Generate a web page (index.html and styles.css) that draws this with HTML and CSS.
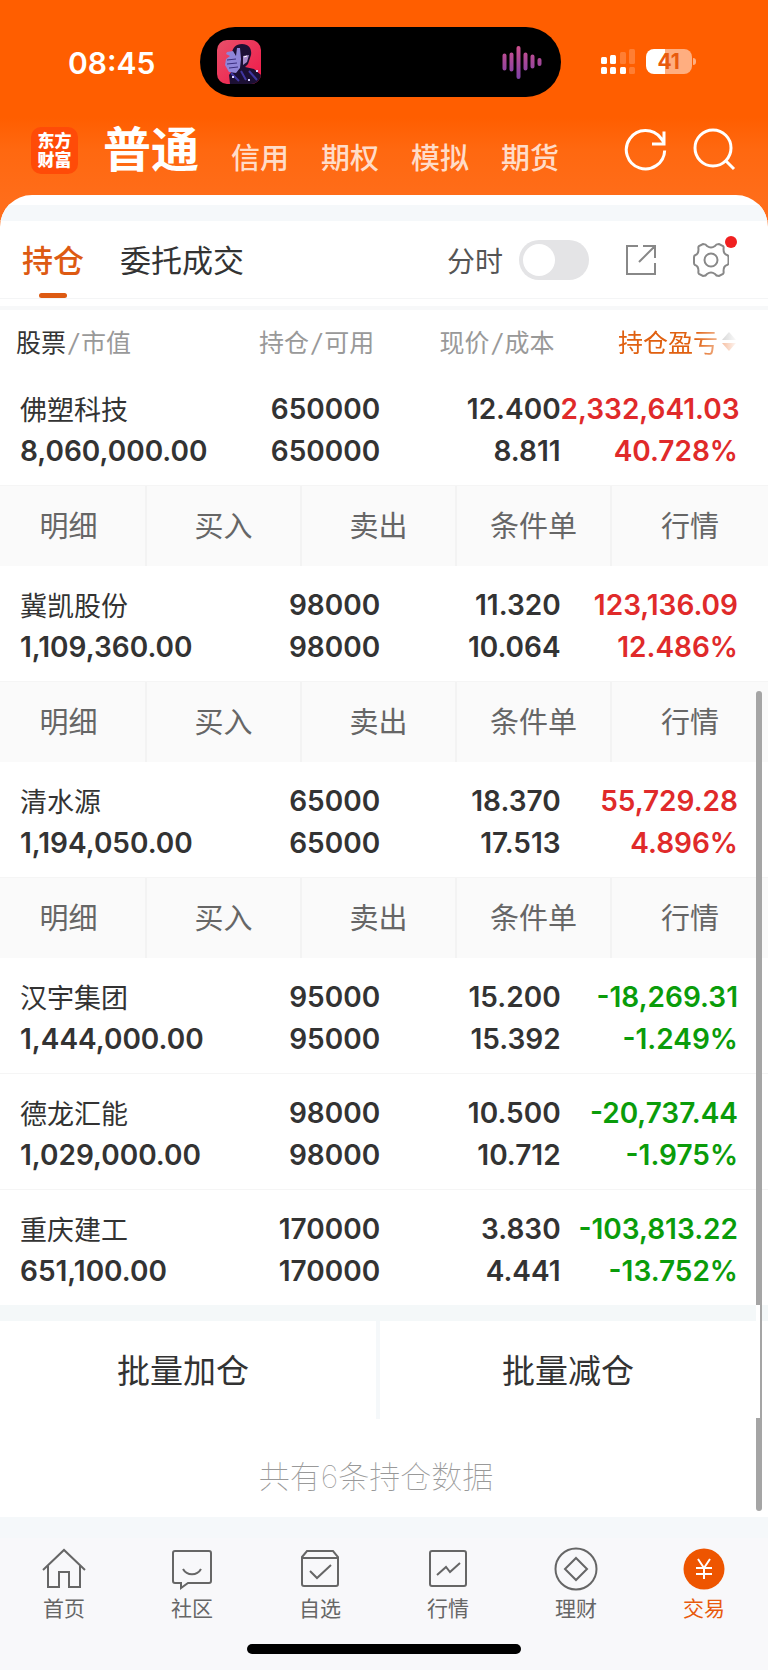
FILE: index.html
```html
<!DOCTYPE html>
<html lang="zh-CN">
<head>
    <meta charset="UTF-8">
    <meta name="viewport" content="width=device-width, initial-scale=1.0">
    <title>东方财富 - 持仓</title>
    <link rel="stylesheet" href="styles.css">
</head>
<body>
    <header class="top">
        <!-- Status bar -->
        <div class="status">
            <span class="time">08:45</span>
            <div class="island">
                <svg class="cover" viewBox="0 0 44 44">
                    <defs>
                        <linearGradient id="coverBg" x1="0" y1="0" x2="1" y2="1">
                            <stop offset="0" stop-color="#e8506a"/>
                            <stop offset="1" stop-color="#f01848"/>
                        </linearGradient>
                        <clipPath id="coverClip"><rect width="44" height="44" rx="10"/></clipPath>
                    </defs>
                    <g clip-path="url(#coverClip)">
                        <rect width="44" height="44" fill="url(#coverBg)"/>
                        <path d="M15 14c0-6 4-10 10-10 7 0 10 5 9 11l-3 9-3 3 9 2 7 6v9H13l-1-9 6-8z" fill="#1c1034"/>
                        <path d="M26 16l6-1-2 7-4 3z" fill="#a58ac8"/>
                        <path d="M27 17l3-1" stroke="#fff" stroke-width="1"/>
                        <path d="M10 12l6-1 3 5 1-8h3l1 11-1 9-4 5-7-1-4-7 1-6 4-3-4-2z" fill="#8f85d8"/>
                        <path d="M10 20l9-1M10 24l10-1M12 28l9-1" stroke="#3c3080" stroke-width="1.200"/>
                        <path d="M14 33l8 8M24 31l5 9M32 31l8 9" stroke="#4036a0" stroke-width="2"/>
                        <path d="M15 37h2M31 40h2M39 31h2" stroke="#d8d4ff" stroke-width="2"/>
                    </g>
                </svg>
                <svg class="wave" viewBox="0 0 40 34">
                    <defs>
                        <linearGradient id="waveColor" x1="0" y1="0" x2="0" y2="34" gradientUnits="userSpaceOnUse">
                            <stop offset="0" stop-color="#d0508c"/>
                            <stop offset="1" stop-color="#7c3fa6"/>
                        </linearGradient>
                    </defs>
                    <path d="M2.500 10.500v13M9.500 9.500v15M16.500 3v29M23.500 9.500v14M30.500 11.500v10M37.500 15v4" stroke="url(#waveColor)" stroke-width="4" stroke-linecap="round"/>
                </svg>
            </div>
            <svg class="signal" viewBox="0 0 36 26">
                <g>
                    <rect x="1" y="8" width="6" height="7" rx="1.500"/>
                    <rect x="10" y="6" width="6" height="9" rx="1.500"/>
                    <rect x="1" y="18" width="6" height="7" rx="1.500"/>
                    <rect x="10" y="18" width="6" height="7" rx="1.500"/>
                    <rect x="20" y="18" width="6" height="7" rx="1.500"/>
                </g>
                <g opacity=".2">
                    <rect x="20" y="3" width="6" height="12" rx="1.500"/>
                    <rect x="29" y="0" width="6" height="15" rx="1.500"/>
                    <rect x="29" y="18" width="6" height="7" rx="1.500"/>
                </g>
            </svg>
            <span class="battery">41</span>
        </div>

        <!-- Account type navigation -->
        <nav class="accounts">
            <span class="logo">东方<br>财富</span>
            <a href="#" class="current">普通</a>
            <a href="#">信用</a>
            <a href="#">期权</a>
            <a href="#">模拟</a>
            <a href="#">期货</a>
            <button class="refresh" aria-label="刷新">
                <svg viewBox="0 0 44 44"><path d="M40.700 22.500a19.200 19.200 0 1 1-4-12.500l3 4M40 3.500v12.500H28"/></svg>
            </button>
            <button class="search" aria-label="搜索">
                <svg viewBox="0 0 44 44"><circle cx="21" cy="20" r="18"/><path d="M33 32l9 9"/></svg>
            </button>
        </nav>
    </header>

    <main class="panel">
        <div class="tabs">
            <button class="tab active">持仓</button>
            <button class="tab">委托成交</button>
            <label class="switch">分时 <input type="checkbox"></label>
            <button class="tool" aria-label="分享">
                <svg viewBox="0 0 36 36"><path d="M15 4H4v28h28V21M20 4h12v12M32 4L16 20"/></svg>
            </button>
            <button class="tool settings" aria-label="设置">
                <svg viewBox="0 0 36 36"><path d="M10 2Q13 2 14 4q4 3 8 0 1-2 4-2l4 2q1 1 .5 3 0 5 3.500 6 1.500.5 1.500 2v6q0 1.500-1.500 2-3.500 1-3.500 6 .5 2-.5 3l-4 2q-3 0-4-2-4-3-8 0-1 2-4 2l-4-2q-1-1-.5-3 0-5-3.500-6Q1 22.500 1 21v-6q0-1.500 1.500-2Q5.500 12 5.500 7 5 5 6 4z"/><circle cx="18" cy="18" r="6.500"/></svg>
            </button>
        </div>

        <table class="holdings">
            <thead>
                <tr>
                    <th><b>股票</b><i>/</i>市值</th>
                    <th>持仓<i>/</i>可用</th>
                    <th>现价<i>/</i>成本</th>
                    <th class="sorted"><span>持仓盈亏<svg viewBox="0 0 14 20"><path d="M0 9l7-8 7 8z" fill="#999"/><path d="M0 12l7 8 7-8z" fill="#e8590c"/></svg></span></th>
                </tr>
            </thead>
            <tbody>
                <tr>
                    <td><span class="name">佛塑科技</span>8,060,000.00</td>
                    <td>650000<br>650000</td>
                    <td>12.400<br>8.811</td>
                    <td class="up">2,332,641.03<br>40.728%</td>
                </tr>
                <tr class="menu">
                    <td colspan="4">
                        <div class="actions"><button>明细</button><button>买入</button><button>卖出</button><button>条件单</button><button>行情</button></div>
                    </td>
                </tr>
                <tr>
                    <td><span class="name">冀凯股份</span>1,109,360.00</td>
                    <td>98000<br>98000</td>
                    <td>11.320<br>10.064</td>
                    <td class="up">123,136.09<br>12.486%</td>
                </tr>
                <tr class="menu">
                    <td colspan="4">
                        <div class="actions"><button>明细</button><button>买入</button><button>卖出</button><button>条件单</button><button>行情</button></div>
                    </td>
                </tr>
                <tr>
                    <td><span class="name">清水源</span>1,194,050.00</td>
                    <td>65000<br>65000</td>
                    <td>18.370<br>17.513</td>
                    <td class="up">55,729.28<br>4.896%</td>
                </tr>
                <tr class="menu">
                    <td colspan="4">
                        <div class="actions"><button>明细</button><button>买入</button><button>卖出</button><button>条件单</button><button>行情</button></div>
                    </td>
                </tr>
                <tr>
                    <td><span class="name">汉宇集团</span>1,444,000.00</td>
                    <td>95000<br>95000</td>
                    <td>15.200<br>15.392</td>
                    <td class="down">-18,269.31<br>-1.249%</td>
                </tr>
                <tr>
                    <td><span class="name">德龙汇能</span>1,029,000.00</td>
                    <td>98000<br>98000</td>
                    <td>10.500<br>10.712</td>
                    <td class="down">-20,737.44<br>-1.975%</td>
                </tr>
                <tr>
                    <td><span class="name">重庆建工</span>651,100.00</td>
                    <td>170000<br>170000</td>
                    <td>3.830<br>4.441</td>
                    <td class="down">-103,813.22<br>-13.752%</td>
                </tr>
            </tbody>
        </table>

        <div class="batch">
            <button>批量加仓</button>
            <button>批量减仓</button>
        </div>
        <p class="total">共有6条持仓数据</p>
        <div class="scrollbar"></div>
    </main>

    <!-- Bottom navigation -->
    <footer class="bottom">
        <nav class="menu-bar">
            <a href="#">
                <svg viewBox="0 0 44 44"><path d="M1 23L22 3l21 20M6 19v21h11V25h10v15h11V19"/></svg>
                首页
            </a>
            <a href="#">
                <svg viewBox="0 0 44 44"><path d="M5 4h34q2 0 2 2v28q0 2-2 2H18l-7 5v-5H5q-2 0-2-2V6q0-2 2-2zM13 22c4 7 14 7 18 0"/></svg>
                社区
            </a>
            <a href="#">
                <svg viewBox="0 0 44 44"><path d="M4 10l5-6h26l5 6v27q0 2-2 2H6q-2 0-2-2zM4 11h36M12 24l7 7 14-13"/></svg>
                自选
            </a>
            <a href="#">
                <svg viewBox="0 0 44 44"><rect x="4" y="4" width="36" height="35" rx="2"/><path d="M11 28l9-8 4 5 10-9"/></svg>
                行情
            </a>
            <a href="#">
                <svg viewBox="0 0 44 44"><circle cx="22" cy="22" r="20.500"/><path d="M22 11l11 11-11 11-11-11z"/></svg>
                理财
            </a>
            <a href="#" class="active">
                <svg viewBox="0 0 44 44"><circle cx="22" cy="22" r="20.500"/><path d="M16 12l6 9 6-9M14 21h16M14 27h16M22 21v11"/></svg>
                交易
            </a>
        </nav>
        <div class="home-indicator"></div>
    </footer>
</body>
</html>
```
FILE: styles.css
```css
* {
    margin: 0;
    padding: 0;
    box-sizing: border-box;
}

body {
    background: #f8f8fa;
    color: #333;
    font-family: 'Inter', 'Noto Sans CJK SC', sans-serif;
}

a {
    color: inherit;
    text-decoration: none;
}

button {
    background: none;
    border: none;
    color: inherit;
    font-family: inherit;
    cursor: pointer;
}

svg {
    display: block;
    fill: none;
}

/* Orange header */
.top {
    height: 227px;
    background: linear-gradient(#ff5e00 0, #ff5e00 118px, #ff6810 150px, #ff6d1a 200px);
    color: #fff;
}

.status {
    display: flex;
    align-items: center;
    height: 123px;
}

.time {
    width: 26%;
    padding: 2px 0 0 68px;
    font-size: 30px;
    font-weight: 600;
}

.island {
    display: flex;
    align-items: center;
    justify-content: space-between;
    width: 47%;
    height: 70px;
    padding: 0 19px 0 17px;
    border-radius: 35px;
    background: #000;
}

.cover {
    width: 44px;
    height: 44px;
}

.wave {
    width: 40px;
    height: 34px;
}

.signal {
    width: 36px;
    height: 26px;
    margin: 0 10px 0 39px;
}

.signal g {
    fill: #fff;
}

.battery {
    position: relative;
    width: 46px;
    height: 25px;
    border-radius: 8px;
    background: linear-gradient(90deg, #fff 42%, #ffae80 42%);
    color: #e85a0c;
    font-size: 21px;
    font-weight: 700;
    line-height: 25px;
    text-align: center;
}

.battery::after {
    content: '';
    position: absolute;
    top: 9px;
    right: -4px;
    width: 3px;
    height: 7px;
    border-radius: 0 3px 3px 0;
    background: #ffae80;
}

.accounts {
    display: flex;
    align-items: center;
    height: 54px;
    padding: 0 32px 0 31px;
}

.accounts a {
    margin: 17px 0 0 32px;
    color: #ffdcc8;
    font-size: 29px;
    font-weight: 500;
    line-height: 40px;
}

.accounts .current {
    margin: 0 0 0 25px;
    color: #fff;
    font-size: 48px;
    font-weight: 700;
    line-height: 54px;
}

.logo {
    width: 47px;
    height: 47px;
    padding-top: 5px;
    border-radius: 10px;
    background: #ff4b08;
    font-size: 17px;
    font-weight: 900;
    line-height: 19px;
    text-align: center;
}

.accounts svg {
    width: 44px;
    height: 44px;
    stroke: #fff;
    stroke-width: 3;
}

.refresh {
    margin-left: auto;
}

.search {
    margin-left: 24px;
}

/* White sheet */
.panel {
    position: relative;
    margin-top: -32px;
    padding-top: 10px;
    border-radius: 32px 32px 0 0;
    background: #fff;
    overflow: hidden;
}

.tabs {
    display: flex;
    align-items: center;
    height: 94px;
    padding: 0 39px 0 22px;
    border-top: 16px solid #f5f8fa;
    border-bottom: 1px solid #f4f5f6;
}

.tab {
    position: relative;
    height: 77px;
    margin-right: 36px;
    padding-bottom: 2px;
    font-size: 31px;
}

.tab.active {
    color: #dd5a12;
    font-weight: 500;
}

.tab.active::after {
    content: '';
    position: absolute;
    bottom: 0;
    left: 17px;
    width: 28px;
    height: 5px;
    border-radius: 3px;
    background: #dd5a12;
}

.switch {
    display: flex;
    align-items: center;
    gap: 16px;
    margin-left: auto;
    color: #555;
    font-size: 28px;
}

.switch input {
    appearance: none;
    width: 70px;
    height: 40px;
    padding: 4px;
    border-radius: 20px;
    background: #e4e4e6;
}

.switch input::before {
    content: '';
    display: block;
    width: 32px;
    height: 32px;
    border-radius: 50%;
    background: #fff;
}

.switch input:checked {
    padding-left: 34px;
    background: #dd5a12;
}

.tool {
    position: relative;
    margin-left: 34px;
}

.tool svg {
    width: 36px;
    height: 36px;
    stroke: #888;
    stroke-width: 2;
}

.settings::after {
    content: '';
    position: absolute;
    top: -6px;
    right: -8px;
    width: 12px;
    height: 12px;
    border-radius: 50%;
    background: #f02020;
}

/* Holdings table */
.holdings {
    width: 100%;
    margin-top: 7px;
    border-top: 4px solid #f7f8f9;
    border-collapse: separate;
    border-spacing: 0;
    table-layout: fixed;
}

th {
    height: 60px;
    padding: 2px 6px 0 0;
    color: #999;
    font-size: 25px;
    font-weight: 400;
    text-align: right;
    white-space: nowrap;
}

th:first-child {
    width: 26%;
    padding-left: 16px;
    text-align: left;
}

th:nth-child(2),
th:nth-child(3) {
    width: 23.500%;
}

th b {
    color: #333;
    font-weight: 400;
}

th i {
    padding: 0 3px;
}

th.sorted {
    padding-right: 32px;
    color: #e06010;
}

.sorted span {
    display: inline-flex;
    align-items: center;
    gap: 4px;
    mask-image: linear-gradient(90deg, #000 66%, transparent 102%);
}

.sorted svg {
    width: 14px;
    height: 20px;
}

td {
    height: 116px;
    padding-top: 4px;
    border-bottom: 1px solid #f5f5f5;
    font-size: 28px;
    font-weight: 600;
    line-height: 42px;
    text-align: right;
    white-space: nowrap;
}

td:first-child {
    padding-left: 20px;
    text-align: left;
}

td:last-child {
    padding-right: 30px;
}

.name {
    display: block;
    margin-bottom: -4px;
    font-size: 27px;
    font-weight: 400;
    line-height: 46px;
}

.up {
    color: #e02a2a;
}

.down {
    color: #0a9c0a;
}

.menu td,
.menu td:first-child {
    height: 80px;
    padding: 0;
    border: none;
}

tr:last-child td {
    height: 115px;
    border: none;
}

.actions {
    display: grid;
    grid-template-columns: 147fr 155fr 155fr 155fr 156fr;
    background: #fafafa;
}

.actions button {
    height: 80px;
    padding-bottom: 4px;
    border-right: 2px solid #f3f3f3;
    color: #666;
    font-size: 29px;
}

.actions button:first-child {
    padding-right: 8px;
}

.actions button:last-child {
    border-right: none;
}

/* Batch buttons */
.batch {
    display: flex;
    padding-right: 8px;
    border-top: 16px solid #f4f8f9;
}

.batch button {
    width: 50%;
    height: 98px;
    padding: 0 4px 3px 0;
    font-size: 33px;
}

.batch button:first-child {
    padding-right: 10px;
    border-right: 4px solid #f5f8fa;
}

.total {
    height: 98px;
    padding-right: 16px;
    color: #999;
    font-size: 31px;
    font-weight: 100;
    line-height: 116px;
    text-align: center;
}

.scrollbar {
    position: absolute;
    right: 6px;
    bottom: 6px;
    width: 6px;
    height: 820px;
    border-radius: 3px;
    background: #a5a5a5;
}

.scrollbar::before {
    content: '';
    position: absolute;
    right: 2px;
    bottom: 93px;
    width: 4px;
    height: 113px;
    background: #fff;
}

/* Bottom bar */
.bottom {
    padding: 25px 0 14px;
    border-top: 5px solid #f5f8fa;
    background: linear-gradient(#f5f8fa 16px, #f8f8fa 16px);
}

.menu-bar {
    display: grid;
    grid-template-columns: repeat(6, 1fr);
}

.menu-bar a {
    display: flex;
    flex-direction: column;
    align-items: center;
    gap: 3px;
    color: #666;
    font-size: 21px;
    line-height: 30px;
}

.menu-bar svg {
    width: 44px;
    height: 44px;
    stroke: #666;
    stroke-width: 2;
}

.menu-bar .active {
    color: #e85a0c;
}

.active circle {
    fill: #ee5500;
    stroke: none;
}

.active path {
    stroke: #fff;
}

.home-indicator {
    width: 274px;
    height: 10px;
    margin: 20px auto 0;
    border-radius: 5px;
    background: #000;
}
```
